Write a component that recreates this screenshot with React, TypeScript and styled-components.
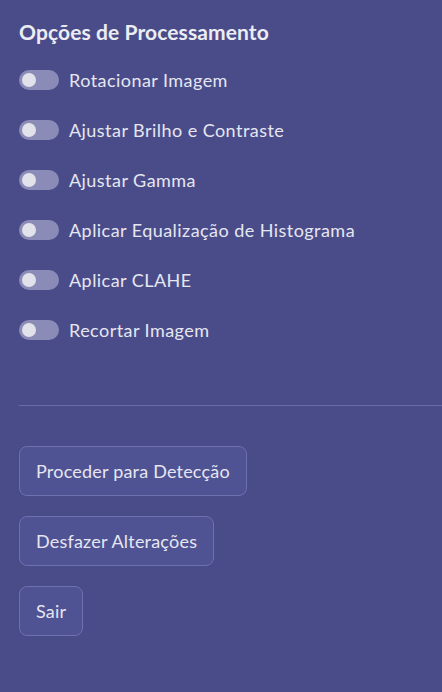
import styled, { createGlobalStyle } from "styled-components";

const GlobalStyle = createGlobalStyle`
  html, body {
    margin: 0;
    padding: 0;
    background: #4a4c8a;
  }
  body {
    font-family: Lato, "Noto Sans", sans-serif;
  }
`;

const Sidebar = styled.div`
  width: 442px;
  height: 692px;
  box-sizing: border-box;
  background: #4a4c8a;
  color: #e6e6f0;
  padding: 19px 0 0 19px;
  overflow: hidden;
`;

const Title = styled.h2`
  margin: 0 0 25px;
  font-size: 21px;
  font-weight: 700;
  letter-spacing: 0.1px;
  line-height: 26px;
  color: #ececf3;
`;

const OptionList = styled.div`
  display: flex;
  flex-direction: column;
  gap: 30px;
`;

const Row = styled.label`
  display: flex;
  align-items: center;
  gap: 10px;
  height: 20px;
  font-size: 18px;
  letter-spacing: 0.45px;
`;

const Track = styled.span`
  position: relative;
  width: 40px;
  height: 20px;
  border-radius: 10px;
  background: #8a8bb7;
  flex-shrink: 0;
`;

const Knob = styled.span`
  position: absolute;
  top: 3px;
  left: 3px;
  width: 14px;
  height: 14px;
  border-radius: 50%;
  background: #e2e2ea;
`;

const Divider = styled.hr`
  margin: 65px 0 40px;
  border: none;
  border-top: 1px solid #6a6ca3;
`;

const Buttons = styled.div`
  display: flex;
  flex-direction: column;
  align-items: flex-start;
  gap: 20px;
`;

const Button = styled.button`
  height: 50px;
  padding: 0 16px;
  border-radius: 8px;
  border: 1px solid #6f71ac;
  background: #4f5293;
  color: #e6e6f0;
  font-family: inherit;
  font-size: 18px;
  letter-spacing: 0.2px;
`;

const options = [
  "Rotacionar Imagem",
  "Ajustar Brilho e Contraste",
  "Ajustar Gamma",
  "Aplicar Equalização de Histograma",
  "Aplicar CLAHE",
  "Recortar Imagem",
];

export default function App() {
  return (
    <>
      <GlobalStyle />
      <Sidebar>
        <Title>Opções de Processamento</Title>
        <OptionList>
          {options.map((o) => (
            <Row key={o}>
              <Track>
                <Knob />
              </Track>
              {o}
            </Row>
          ))}
        </OptionList>
        <Divider />
        <Buttons>
          <Button>Proceder para Detecção</Button>
          <Button>Desfazer Alterações</Button>
          <Button>Sair</Button>
        </Buttons>
      </Sidebar>
    </>
  );
}
